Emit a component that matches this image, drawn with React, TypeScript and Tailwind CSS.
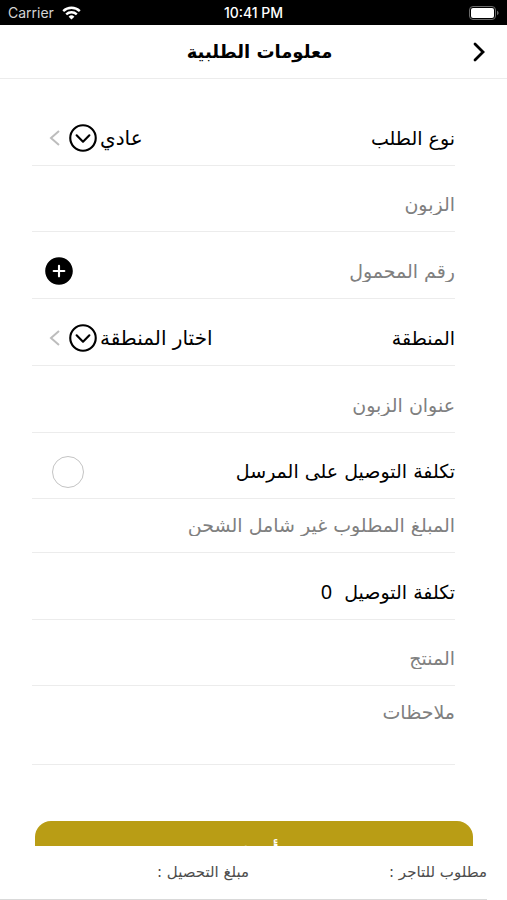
import { useState } from 'react'
import type { ReactNode } from 'react'
import { IoAddCircle, IoChevronDownCircleOutline } from 'react-icons/io5'

const inputClass = 'w-full min-w-0 flex-1 bg-transparent text-black outline-none placeholder:text-[#808080]'

function StatusBar() {
  return (
    <div dir="ltr" className="grid h-[25px] shrink-0 grid-cols-3 items-center bg-black px-2 pt-px font-['Inter',sans-serif] text-sm text-white">
      <div className="flex items-center gap-2 text-[#d4d4d4]">
        <span>Carrier</span>
        <svg width="19" height="14" viewBox="0 0 19 14" fill="none" stroke="white" strokeWidth="2.4">
          <path d="M1.2 5.1a12 12 0 0 1 16.6 0" />
          <path d="M4.2 8.3a7.7 7.7 0 0 1 10.6 0" />
          <path d="M9.5 13.6 6.6 10.7a4.2 4.2 0 0 1 5.8 0z" fill="white" stroke="none" />
        </svg>
      </div>
      <div className="text-center font-medium">10:41 PM</div>
      <svg className="justify-self-end" width="30" height="14" viewBox="0 0 30 14" fill="none">
        <rect x="0.5" y="0.5" width="26" height="13" rx="3.5" stroke="#6b6b6b" />
        <rect x="2" y="2" width="23" height="10" rx="2" fill="white" />
        <path d="M28 4.8v4.4c1-.4 1.6-1.2 1.6-2.2s-.6-1.8-1.6-2.2z" fill="#6b6b6b" />
      </svg>
    </div>
  )
}

function Row({ children, className = 'h-[54px]' }: { children: ReactNode; className?: string }) {
  return <div className={`flex items-center border-b border-[#ececec] ${className}`}>{children}</div>
}

function PickerRow({ id, label, options }: { id: string; label: string; options: string[] }) {
  return (
    <Row className="mt-3 h-[55px]">
      <label htmlFor={id}>{label}</label>
      <div className="ms-auto me-4 flex items-center">
        <select id={id} className="appearance-none bg-transparent text-xl outline-none [field-sizing:content]">
          {options.map((o) => (
            <option key={o}>{o}</option>
          ))}
        </select>
        <IoChevronDownCircleOutline className="size-[34px]" />
        <svg className="ms-1" width="14" height="18" viewBox="0 0 14 18" fill="none" stroke="#bdbdbd" strokeWidth="2">
          <path d="M11 2 3 9l8 7" />
        </svg>
      </div>
    </Row>
  )
}

export default function App() {
  const [onSender, setOnSender] = useState(false)

  return (
    <div dir="rtl" className="flex h-screen flex-col bg-white font-['DejaVu_Sans',sans-serif] text-[19px] text-black">
      <StatusBar />
      <header className="grid h-[54px] shrink-0 grid-cols-[24px_1fr_36px] items-center border-b border-[#ececec] px-4">
        <button aria-label="رجوع" className="flex justify-center">
          <svg width="16" height="22" viewBox="0 0 16 22" fill="none" stroke="black" strokeWidth="2.8" strokeLinecap="round">
            <path d="m4 3 8 8-8 8" />
          </svg>
        </button>
        <h1 className="text-center text-lg font-semibold">معلومات الطلبية</h1>
      </header>

      <main className="min-h-0 flex-1 overflow-hidden">
        <form className="pt-5" onSubmit={(e) => e.preventDefault()}>
          <div className="ms-[52px] me-8">
            <PickerRow id="type" label="نوع الطلب" options={['عادي']} />
            <Row className="mt-3 h-[54px]">
              <input aria-label="الزبون" placeholder="الزبون" className={inputClass} />
            </Row>
            <Row className="mt-3 h-[55px]">
              <input type="tel" dir="rtl" aria-label="رقم المحمول" placeholder="رقم المحمول" className={inputClass} />
              <button type="button" aria-label="إضافة رقم" className="me-2.5">
                <IoAddCircle className="size-[34px]" />
              </button>
            </Row>
            <PickerRow id="region" label="المنطقة" options={['اختار المنطقة']} />
            <Row className="mt-3 h-[55px]">
              <input aria-label="عنوان الزبون" placeholder="عنوان الزبون" className={inputClass} />
            </Row>
            <Row className="mt-3 h-[54px]">
              <label htmlFor="sender">تكلفة التوصيل على المرسل</label>
              <input
                id="sender"
                type="checkbox"
                checked={onSender}
                onChange={(e) => setOnSender(e.target.checked)}
                className="ms-auto me-5 size-8 appearance-none rounded-full border border-[#c4c4c4] checked:bg-[#b89c14]"
              />
            </Row>
            <Row>
              <input aria-label="المبلغ المطلوب" placeholder="المبلغ المطلوب غير شامل الشحن" className={inputClass} />
            </Row>
            <Row className="mt-3 h-[55px]">
              <span>تكلفة التوصيل</span>
              <span className="ms-3 font-['Noto_Sans',sans-serif] text-xl">0</span>
            </Row>
            <Row className="mt-3 h-[54px]">
              <input aria-label="المنتج" placeholder="المنتج" className={inputClass} />
            </Row>
            <Row className="h-[79px]">
              <textarea aria-label="ملاحظات" placeholder="ملاحظات" className={`h-full resize-none py-3 ${inputClass}`} />
            </Row>
          </div>
          <div className="mt-14 ps-[34px] pe-[35px]">
            <button className="h-[62px] w-full rounded-2xl bg-[#b99d15] text-xl font-semibold text-white">أضف</button>
          </div>
        </form>
      </main>

      <footer className="ms-5 grid h-[54px] shrink-0 grid-cols-[238px_1fr] items-center border-b border-[#d9d9d9] text-[15px] text-[#4d4d4d]">
        <span>مطلوب للتاجر :</span>
        <span>مبلغ التحصيل :</span>
      </footer>
    </div>
  )
}
